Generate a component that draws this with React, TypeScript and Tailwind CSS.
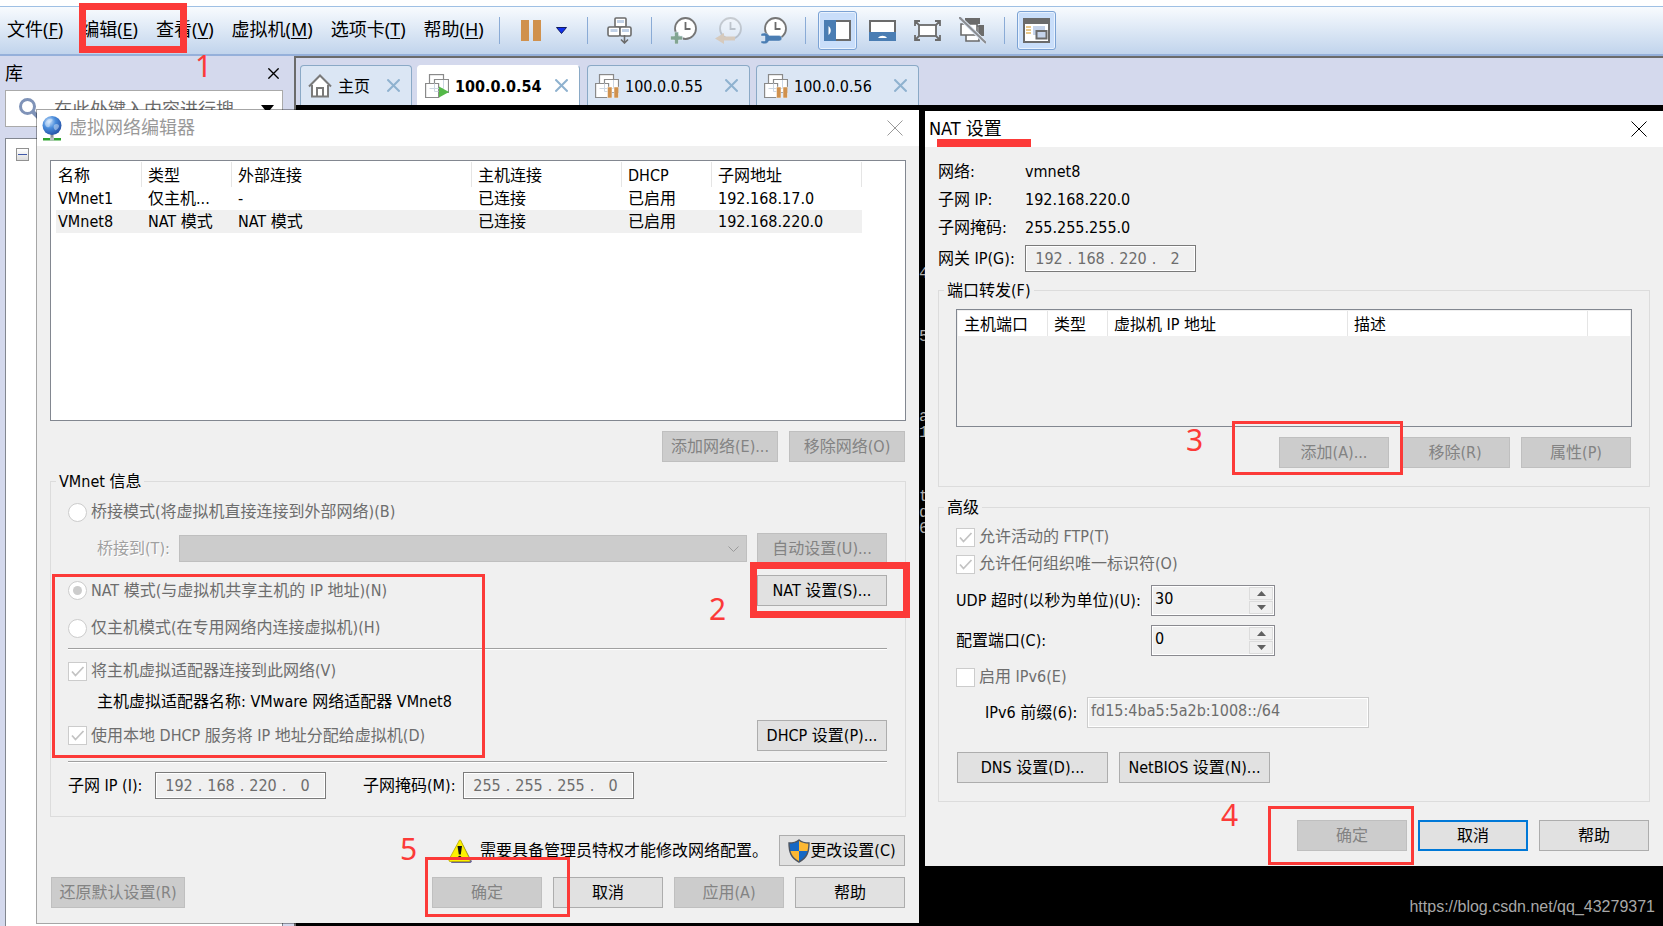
import type { ReactNode } from "react";
import clsx from "clsx";

const MENUS = [
  ["文件", "F"],
  ["编辑", "E"],
  ["查看", "V"],
  ["虚拟机", "M"],
  ["选项卡", "T"],
  ["帮助", "H"],
];

const NETWORKS = [
  ["VMnet1", "仅主机...", "-", "已连接", "已启用", "192.168.17.0"],
  ["VMnet8", "NAT 模式", "NAT 模式", "已连接", "已启用", "192.168.220.0"],
];

/* ---------- icons ---------- */

function CloseIcon({ className }: { className?: string }) {
  return (
    <svg viewBox="0 0 16 16" className={clsx("shrink-0", className)} fill="none" stroke="currentColor">
      <path d="M0.5 0.5 15.5 15.5M15.5 0.5 0.5 15.5" />
    </svg>
  );
}

function PauseIcon() {
  return (
    <svg width="20" height="21" viewBox="0 0 20 21" fill="#d0914d">
      <path d="M0 0h8v21H0zM12 0h8v21h-8z" />
    </svg>
  );
}

function SendKeysIcon() {
  return (
    <svg width="25" height="27" viewBox="0 0 25 27" fill="#fff" stroke="#6b6b6b" strokeWidth="1.6">
      <rect x="8" y="1" width="11" height="9" rx="1" />
      <rect x="1" y="10" width="12" height="9" rx="1.5" />
      <rect x="13" y="10" width="11" height="9" rx="1.5" />
      <path d="M10 3h7v3h-7zM3.500 12h7v3h-7zM15 12h7v3h-7z" fill="#c2d2e8" stroke="none" />
      <path d="M17.500 18v8M14 22.500l3.500 3.500 3.500-3.500" fill="none" />
    </svg>
  );
}

function ClockIcon({ kind }: { kind: "take" | "revert" | "manage" }) {
  return (
    <svg width="27" height="27" viewBox="0 0 27 27" fill="none">
      <g opacity={kind === "revert" ? 0.3 : 1}>
        <circle cx="15.500" cy="11.500" r="10.500" fill="#fff" stroke="#767676" strokeWidth="1.8" />
        <path d="M15.500 5v7h5" stroke="#6b6b6b" strokeWidth="1.8" />
      </g>
      {kind === "take" && (
        <path d="M4.500 15h4v4h4v4h-4v4h-4v-4h-4v-4h4z" fill="#82a592" stroke="#e4edf8" strokeWidth="0.6" />
      )}
      {kind === "revert" && <path d="M0 21.500 9 16v3.500h11v4H9V27z" fill="#d6cabd" />}
      {kind === "manage" && (
        <path
          d="M1 17c3-2 6.500-1 8 1.500h10a2.500 2.500 0 0 1 0 5.500H9C7.500 27 3.500 27.500 1 26v-2h4v-5H1z"
          fill="#4a7db3"
          stroke="#e4edf8"
          strokeWidth="0.4"
        />
      )}
    </svg>
  );
}

function SidebarIcon() {
  return (
    <svg width="27" height="21" viewBox="0 0 27 21">
      <rect x="1" y="1" width="25" height="19" fill="#fff" stroke="#6b6b6b" strokeWidth="2" />
      <path d="M0 0h12v21H0z" fill="#4a7db3" />
      <path d="M4.500 6c3 2 3 7 0 9z" fill="#fff" />
    </svg>
  );
}

function ThumbnailBarIcon() {
  return (
    <svg width="27" height="21" viewBox="0 0 27 21">
      <rect x="1" y="1" width="25" height="19" fill="#fff" stroke="#6b6b6b" strokeWidth="2" />
      <path d="M0 12h27v9H0z" fill="#4a7db3" />
      <path d="M9 18c2-3 7-3 9 0z" fill="#fff" />
    </svg>
  );
}

function FullScreenIcon() {
  return (
    <svg width="27" height="21" viewBox="0 0 27 21" fill="none" stroke="#6b6b6b" strokeWidth="1.8">
      <rect x="5" y="5" width="17" height="11" fill="#fff" />
      <path d="M1 6V1h5M1 1l4 4M21 1h5v5M26 1l-4 4M1 15v5h5M1 20l4-4M26 15v5h-5M26 20l-4-4" />
    </svg>
  );
}

function UnityIcon() {
  return (
    <svg width="27" height="27" viewBox="0 0 27 27">
      <path d="M6 1h15v6H6zM20 8h5v11h-5z" fill="#6b6b6b" />
      <path d="M7 9h13v15H7z" fill="#fff" stroke="#6b6b6b" strokeWidth="1.6" />
      <path d="M2 7h16v11H2z" fill="#fff" stroke="#6b6b6b" strokeWidth="1.6" />
      <path d="M0 0l27 26" stroke="#e0eaf7" strokeWidth="4" />
      <path d="M0 0l27 26" stroke="#8b8d91" strokeWidth="2.2" />
    </svg>
  );
}

function ConsoleIcon() {
  return (
    <svg width="27" height="25" viewBox="0 0 27 25">
      <rect x="1" y="1" width="25" height="23" fill="#fff" stroke="#6b6b6b" strokeWidth="2" />
      <path d="M0 0h27v6H0z" fill="#6b6b6b" />
      <path d="M3 9h5M3 12h5M3 15h5" stroke="#e2b664" strokeWidth="1.5" />
      <path d="M10 8h12v9H10z" fill="#c5d3ea" />
      <rect x="13.500" y="13" width="10" height="7.500" fill="#c5d3ea" stroke="#6b6b6b" strokeWidth="2" />
    </svg>
  );
}

function HomeIcon() {
  return (
    <svg width="24" height="24" viewBox="0 0 24 24" fill="none" stroke="#7a7a7a" strokeWidth="2">
      <path d="M4 11v11h16V11L12 2.500z" fill="#fff" stroke="none" />
      <path d="M4 11v11.500h16V11M9 22v-8h6v8" />
      <path d="M1 12.500 12 1.500l11 11" />
    </svg>
  );
}

function VmIcon({ state }: { state: "running" | "paused" }) {
  return (
    <svg width="24" height="24" viewBox="0 0 24 24" fill="none" stroke="#8a8a8a" strokeWidth="1.2">
      <rect x="4.500" y="0.600" width="14" height="14" fill="#fff" />
      <path d="M9.500 5.500h14v13h-14z" fill="#fff" />
      <path d="M0.600 9.500h13v14h-13z" fill="#fff" />
      <path d="M9.500 9.500v8h4M4.500 14.500h9M18.500 6v8.500h-5" stroke="#ccd6e2" strokeWidth="1" />
      {state === "running" ? (
        <path d="M14 12.500 24 18l-10 5.500z" fill="#54b948" stroke="none" />
      ) : (
        <path d="M12.500 13h4.500v11h-4.500zM19 13h4.500v11H19z" fill="#d0914d" stroke="#fff" strokeWidth="0.5" />
      )}
    </svg>
  );
}

function GlobeIcon() {
  return (
    <svg width="20" height="25" viewBox="0 0 20 25" className="shrink-0">
      <defs>
        <radialGradient id="globe" cx="0.35" cy="0.3" r="0.75">
          <stop offset="0" stopColor="#cfe4fb" />
          <stop offset="0.45" stopColor="#4a8ddc" />
          <stop offset="1" stopColor="#2450a5" />
        </radialGradient>
      </defs>
      <path d="M8.500 18h3v4h-3z" fill="#8e9499" />
      <path d="M1 22h18v2.500H1z" fill="#2fa32f" />
      <path d="M8 21.500h4v3H8z" fill="#b9bec2" />
      <circle cx="10" cy="9.500" r="9.500" fill="url(#globe)" />
      <path d="M3 7c2-4 5-5 7-4s-1 3-2 4 1 3-1 4-4-1-4-4zM12 9c2-2 5-1 5 1s-3 5-4 4-2-3-1-5z" fill="#e6f1fd" opacity="0.45" />
    </svg>
  );
}

function WarningIcon() {
  return (
    <svg width="24" height="24" viewBox="0 0 24 24" className="shrink-0">
      <path d="M13 2 24 22.500 22.500 24H3z" fill="#6a6496" />
      <path d="M11.500 1 1 20.500q-.5 2 1 2h19q1.500 0 1-2L12.500 1q-.5-.6-1 0z" fill="#fdf100" stroke="#b9a800" strokeWidth="0.8" />
      <path d="M9.500 7h4.500l-1.200 8.500h-2z" fill="#111" />
      <circle cx="11.700" cy="18.500" r="1.700" fill="#111" />
    </svg>
  );
}

function ShieldIcon() {
  return (
    <svg width="22" height="24" viewBox="0 0 22 24" className="shrink-0">
      <defs>
        <clipPath id="shield">
          <path d="M11 1C8 3.500 4.500 4 1 4c0 9 2 15 10 19 8-4 10-10 10-19-3.500 0-7-.5-10-3z" />
        </clipPath>
      </defs>
      <g clipPath="url(#shield)">
        <path d="M0 0h11v12H0zM11 12h11v12H11z" fill="#1668c4" />
        <path d="M11 0h11v12H11zM0 12h11v12H0z" fill="#fdb833" />
      </g>
      <path
        d="M11 1C8 3.500 4.500 4 1 4c0 9 2 15 10 19 8-4 10-10 10-19-3.500 0-7-.5-10-3z"
        fill="none"
        stroke="#4e5560"
        strokeWidth="1.4"
      />
    </svg>
  );
}

/* ---------- shared controls ---------- */

function Btn({ children, className, disabled, primary }: { children: ReactNode; className?: string; disabled?: boolean; primary?: boolean }) {
  return (
    <button
      type="button"
      disabled={disabled}
      className={clsx(
        "flex h-[31px] shrink-0 items-center justify-center whitespace-nowrap",
        disabled && "border border-[#bfbfbf] bg-[#cccccc] text-[#838383]",
        !disabled && !primary && "border border-[#adadad] bg-[#e1e1e1]",
        primary && "border-2 border-[#0078d7] bg-[#e1e1e1]",
        className,
      )}
    >
      {children}
    </button>
  );
}

function Check({ label, checked, className }: { label: string; checked?: boolean; className?: string }) {
  return (
    <label className={clsx("flex h-5 items-center gap-1 text-[#6d6d6d]", className)}>
      <span className="relative flex">
        <input type="checkbox" disabled defaultChecked={checked} className="h-[19px] w-[19px] appearance-none border border-[#cccccc] bg-white" />
        {checked && (
          <svg viewBox="0 0 19 19" className="absolute inset-0" fill="none" stroke="#c3c3c3" strokeWidth="1.8">
            <path d="M4 9.500 7.500 13.500 15.500 5" />
          </svg>
        )}
      </span>
      <span>{label}</span>
    </label>
  );
}

function Radio({ label, checked, className }: { label: string; checked?: boolean; className?: string }) {
  return (
    <label className={clsx("flex h-5 items-center gap-1 text-[#6d6d6d]", className)}>
      <span className="relative flex">
        <input type="radio" name="mode" disabled defaultChecked={checked} className="h-[19px] w-[19px] appearance-none rounded-full border border-[#cccccc] bg-white" />
        {checked && <span className="absolute inset-[5px] rounded-full bg-[#cccccc]" />}
      </span>
      <span>{label}</span>
    </label>
  );
}

function IpField({ label, parts }: { label: string; parts: string[] }) {
  return (
    <div role="group" aria-label={label} className="flex h-[27px] w-[171px] items-center border border-[#7a7a7a] bg-[#f0f0f0] pl-1.5 text-[#6d6d6d] inset-ring inset-ring-white">
      {parts.map((part, i) => (
        <div key={i} className="flex">
          <input disabled aria-label={`${label} ${i + 1}`} defaultValue={part} className="w-[34px] text-center" />
          {i < 3 && <span className="w-2 text-center">.</span>}
        </div>
      ))}
    </div>
  );
}

function Spinner({ id, value }: { id: string; value: string }) {
  return (
    <div className="flex h-[31px] w-[124px] border border-[#8a8a90] bg-[#f0f0f0] inset-ring inset-ring-white">
      <input id={id} defaultValue={value} className="h-[25px] min-w-0 flex-1 pl-[3px]" />
      <div className="flex w-[26px] flex-col gap-px p-px">
        <button type="button" aria-label="增加" className="flex flex-1 items-center justify-center border border-[#dcdcdc]">
          <svg width="9" height="5" viewBox="0 0 9 5" fill="#606060">
            <path d="M0 5 4.500 0 9 5z" />
          </svg>
        </button>
        <button type="button" aria-label="减少" className="flex flex-1 items-center justify-center border border-[#dcdcdc]">
          <svg width="9" height="5" viewBox="0 0 9 5" fill="#606060">
            <path d="M0 0h9L4.500 5z" />
          </svg>
        </button>
      </div>
    </div>
  );
}

function Group({ title, children, className }: { title: string; children: ReactNode; className?: string }) {
  return (
    <fieldset className={clsx("border border-[#dcdcdc] pr-[18px] pl-[17px]", className)}>
      <legend className="-ml-3 h-5 px-[3px]">{title}</legend>
      {children}
    </fieldset>
  );
}

function Rule({ className }: { className?: string }) {
  return <div className={clsx("h-0.5 border-t border-b border-t-[#a0a0a0] border-b-white", className)} />;
}

function HeadCell({ children }: { children?: ReactNode }) {
  return <th className="h-[25px] border-r border-[#e5e5e5] bg-white pt-0.5 pl-1.5 text-left font-normal whitespace-nowrap">{children}</th>;
}

/* ---------- main window ---------- */

function Separator() {
  return <div className="h-[27px] w-px bg-[#8aabd6]" />;
}

function ToolButton({ label, active, children }: { label: string; active?: boolean; children: ReactNode }) {
  return (
    <button
      type="button"
      aria-label={label}
      className={clsx(
        "flex h-[39px] w-[39px] items-center justify-center rounded-[3px] border",
        active ? "border-[#7ba2d4] bg-[#c9defa] inset-ring inset-ring-white/60" : "border-transparent",
      )}
    >
      {children}
    </button>
  );
}

function Toolbar() {
  return (
    <header className="mt-1.5 flex h-[50px] shrink-0 items-center border-t border-b-2 border-t-[#9fc0e4] border-b-[#95b0da] bg-linear-to-b from-[#f8fbfe] to-[#c1d4ec] pl-[7px] font-['Noto_Sans','Noto_Sans_CJK_SC',sans-serif] text-lg">
      <nav className="flex w-[492px] shrink-0 gap-[18px] pb-1 whitespace-nowrap">
        {MENUS.map(([name, key]) => (
          <button key={key} type="button">
            {name}(<span className="underline underline-offset-2">{key}</span>)
          </button>
        ))}
      </nav>
      <Separator />
      <button type="button" aria-label="挂起" className="ml-[21px]">
        <PauseIcon />
      </button>
      <button type="button" aria-label="电源选项" className="mr-5 ml-[15px]">
        <svg width="11" height="7" viewBox="0 0 11 7">
          <path d="M0.500 0.500h10L5.500 6.500z" fill="#1030f0" stroke="#111c60" />
        </svg>
      </button>
      <Separator />
      <button type="button" aria-label="发送 Ctrl+Alt+Del" className="mx-[19px]">
        <SendKeysIcon />
      </button>
      <Separator />
      <div className="mr-[12px] ml-[12px] flex gap-1.5">
        <ToolButton label="拍摄快照"><ClockIcon kind="take" /></ToolButton>
        <ToolButton label="恢复快照"><ClockIcon kind="revert" /></ToolButton>
        <ToolButton label="管理快照"><ClockIcon kind="manage" /></ToolButton>
      </div>
      <Separator />
      <div className="mr-[12px] ml-[12px] flex gap-1.5">
        <ToolButton label="显示库" active><SidebarIcon /></ToolButton>
        <ToolButton label="缩略图栏"><ThumbnailBarIcon /></ToolButton>
        <ToolButton label="全屏"><FullScreenIcon /></ToolButton>
        <ToolButton label="Unity"><UnityIcon /></ToolButton>
      </div>
      <Separator />
      <div className="ml-[12px]">
        <ToolButton label="控制台视图" active><ConsoleIcon /></ToolButton>
      </div>
    </header>
  );
}

function Library() {
  return (
    <aside className="flex w-[294px] shrink-0 flex-col pr-[11px] pl-[5px] font-['Noto_Sans','Noto_Sans_CJK_SC',sans-serif] text-lg">
      <div className="flex h-[34px] shrink-0 items-center justify-between pr-1">
        <h2>库</h2>
        <button type="button" aria-label="关闭库">
          <CloseIcon className="h-[11px] w-[11px] stroke-[2px]" />
        </button>
      </div>
      <label className="flex h-[37px] shrink-0 items-center border border-[#aaaaaa] bg-white pr-2 pl-3">
        <svg width="24" height="24" viewBox="0 0 24 24" fill="none" stroke="#7f93b8" strokeWidth="3">
          <circle cx="9.500" cy="9.500" r="7" />
          <path d="M14.500 14.500 22 22" strokeWidth="4" />
        </svg>
        <input aria-label="搜索" placeholder="在此处键入内容进行搜" className="ml-3 min-w-0 flex-1 placeholder:text-[#6d6d6d]" />
        <svg width="13" height="8" viewBox="0 0 13 8">
          <path d="M0 0h13L6.500 8z" />
        </svg>
      </label>
      <div className="mt-[11px] flex-1 border border-b-0 border-[#828790] bg-white pt-[9px] pl-2.5">
        <button type="button" aria-label="折叠" className="flex h-[13px] w-[13px] items-center border border-[#919191] bg-linear-to-b from-white to-[#dcdcdc] px-px">
          <span className="h-px w-full bg-[#4058a8]" />
        </button>
      </div>
    </aside>
  );
}

function Tab({ label, icon, active, className }: { label: string; icon: ReactNode; active?: boolean; className?: string }) {
  return (
    <div
      className={clsx(
        "flex h-10 items-center rounded-t-[4px] border border-b-0 pr-[11px] pl-[7px]",
        active ? "border-white border-r-[#8aa9c6] bg-white font-bold" : "border-[#8aa9c6] bg-[#dbe6f4]",
        className,
      )}
    >
      {icon}
      <button type="button" className="ml-1.5 flex-1 pt-0.5 text-left">
        {label}
      </button>
      <button type="button" aria-label={`关闭 ${label}`} className="text-[#8fb2cf]">
        <CloseIcon className="h-[13px] w-[13px] stroke-[2.5px]" />
      </button>
    </div>
  );
}

function Workspace() {
  return (
    <main className="flex min-w-0 flex-1 flex-col border-t-2 border-l-2 border-[#6b6b6b]">
      <div className="flex h-[47px] shrink-0 items-end pl-1">
        <Tab label="主页" icon={<HomeIcon />} className="w-28" />
        <Tab label="100.0.0.54" icon={<VmIcon state="running" />} active className="ml-[5px] w-[163px]" />
        <Tab label="100.0.0.55" icon={<VmIcon state="paused" />} className="ml-[7px] w-[163px]" />
        <Tab label="100.0.0.56" icon={<VmIcon state="paused" />} className="ml-[6px] w-[163px]" />
      </div>
      <div className="relative flex-1 overflow-hidden bg-black font-['Liberation_Mono',monospace] text-[#b0b0b0]">
        <span className="absolute top-[158px] left-[623px]">4</span>
        <span className="absolute top-[221px] left-[623px]">5</span>
        <span className="absolute top-[301px] left-[623px]">a</span>
        <span className="absolute top-[317px] left-[623px]">1</span>
        <span className="absolute top-[381px] left-[623px]">t</span>
        <span className="absolute top-[397px] left-[623px]">d</span>
        <span className="absolute top-[413px] left-[623px]">6</span>
        <a href="https://blog.csdn.net/qq_43279371" className="absolute right-2 bottom-2 font-['Liberation_Sans',sans-serif] text-[#a8a8a8]">
          https://blog.csdn.net/qq_43279371
        </a>
      </div>
    </main>
  );
}

/* ---------- dialogs ---------- */

function NetworkEditor() {
  return (
    <section className="absolute top-[109px] left-9 w-[884px] border border-black/35 bg-[#f0f0f0] bg-clip-padding">
      <div className="flex h-9 items-center bg-white pr-4 pl-[5px] text-[#999999]">
        <GlobeIcon />
        <h1 className="ml-[7px] flex-1 text-lg">虚拟网络编辑器</h1>
        <button type="button" aria-label="关闭">
          <CloseIcon className="h-4 w-4" />
        </button>
      </div>

      <div className="px-[13px] pt-3.5 pb-[15px]">
        <div className="h-[261px] border border-[#828790] bg-white p-px">
          <table className="w-[810px] table-fixed border-separate border-spacing-0">
            <colgroup>
              <col className="w-[90px]" />
              <col className="w-[90px]" />
              <col className="w-[240px]" />
              <col className="w-[150px]" />
              <col className="w-[90px]" />
              <col className="w-[150px]" />
            </colgroup>
            <thead>
              <tr>
                <HeadCell>名称</HeadCell>
                <HeadCell>类型</HeadCell>
                <HeadCell>外部连接</HeadCell>
                <HeadCell>主机连接</HeadCell>
                <HeadCell>DHCP</HeadCell>
                <HeadCell>子网地址</HeadCell>
              </tr>
            </thead>
            <tbody>
              {NETWORKS.map((row, i) => (
                <tr key={row[0]} className={clsx(i === 1 && "bg-[#f0f0f0]")}>
                  {row.map((cell, j) => (
                    <td key={j} className={clsx("h-[23px] whitespace-nowrap", j === 0 ? "border-l-4 border-white pl-0.5" : "pl-1.5")}>
                      {cell}
                    </td>
                  ))}
                </tr>
              ))}
            </tbody>
          </table>
        </div>

        <div className="mt-2.5 flex justify-end gap-[11px] pr-px">
          <Btn disabled className="w-[116px]">添加网络(E)...</Btn>
          <Btn disabled className="w-[116px]">移除网络(O)</Btn>
        </div>

        <Group title="VMnet 信息" className="mt-[9px] pb-[17px]">
          <Radio label="桥接模式(将虚拟机直接连接到外部网络)(B)" className="mt-[11px]" />
          <div className="mt-[11px] flex items-center pl-[29px]">
            <label htmlFor="bridge" className="w-[82px] text-[#a0a0a0] text-shadow-[1px_1px_0_#ffffff]">
              桥接到(T):
            </label>
            <div className="relative flex flex-1">
              <select id="bridge" disabled className="h-[27px] w-full appearance-none border border-[#bfbfbf] bg-[#cccccc]" />
              <svg width="11" height="6" viewBox="0 0 11 6" className="absolute top-[11px] right-2" fill="none" stroke="#9a9a9a">
                <path d="M0.500 0.500l5 5 5-5" />
              </svg>
            </div>
            <Btn disabled className="ml-2.5 w-[130px]">自动设置(U)...</Btn>
          </div>
          <div className="mt-[11px] flex items-center justify-between">
            <Radio label="NAT 模式(与虚拟机共享主机的 IP 地址)(N)" checked />
            <Btn className="w-[130px]">NAT 设置(S)...</Btn>
          </div>
          <Radio label="仅主机模式(在专用网络内连接虚拟机)(H)" className="mt-3" />
          <Rule className="mt-2.5" />
          <Check label="将主机虚拟适配器连接到此网络(V)" checked className="mt-[11px]" />
          <p className="mt-2.5 h-5 pl-[29px]">主机虚拟适配器名称: VMware 网络适配器 VMnet8</p>
          <div className="mt-[9px] flex items-center justify-between">
            <Check label="使用本地 DHCP 服务将 IP 地址分配给虚拟机(D)" checked />
            <Btn className="w-[130px]">DHCP 设置(P)...</Btn>
          </div>
          <Rule className="mt-2.5" />
          <div className="mt-[9px] flex items-center">
            <span className="w-[87px]">子网 IP (I):</span>
            <IpField label="子网 IP" parts={["192", "168", "220", "0"]} />
            <span className="ml-[37px] w-[100px]">子网掩码(M):</span>
            <IpField label="子网掩码" parts={["255", "255", "255", "0"]} />
          </div>
        </Group>

        <div className="mt-[18px] flex items-center justify-end pr-px">
          <WarningIcon />
          <p className="ml-2 w-[299px] whitespace-nowrap">需要具备管理员特权才能修改网络配置。</p>
          <Btn className="w-[126px]">
            <ShieldIcon />
            更改设置(C)
          </Btn>
        </div>
        <div className="mt-[11px] flex gap-[11px] px-px">
          <Btn disabled className="mr-auto w-[134px]">还原默认设置(R)</Btn>
          <Btn disabled className="w-[110px]">确定</Btn>
          <Btn className="w-[110px]">取消</Btn>
          <Btn disabled className="w-[110px]">应用(A)</Btn>
          <Btn className="w-[110px]">帮助</Btn>
        </div>
      </div>
    </section>
  );
}

function NatSettings() {
  return (
    <section className="absolute top-[111px] right-0 left-[925px] bg-[#f0f0f0]">
      <div className="flex h-9 items-center bg-white pr-4 pl-1">
        <h1 className="flex-1 text-lg">NAT 设置</h1>
        <button type="button" aria-label="关闭">
          <CloseIcon className="h-4 w-4" />
        </button>
      </div>

      <div className="px-[13px] pt-3.5 pb-[15px]">
        <dl className="grid grid-cols-[87px_1fr] gap-y-1.5">
          <dt>网络:</dt>
          <dd>vmnet8</dd>
          <dt>子网 IP:</dt>
          <dd>192.168.220.0</dd>
          <dt>子网掩码:</dt>
          <dd>255.255.255.0</dd>
        </dl>
        <div className="mt-1.5 flex items-center">
          <span className="w-[87px] whitespace-nowrap">网关 IP(G):</span>
          <IpField label="网关 IP" parts={["192", "168", "220", "2"]} />
        </div>

        <Group title="端口转发(F)" className="mt-2 pb-[18px]">
          <div className="mt-[9px] -mr-px h-[118px] border border-[#828790] p-px">
            <table className="w-full table-fixed border-separate border-spacing-0">
              <colgroup>
                <col className="w-[90px]" />
                <col className="w-[60px]" />
                <col className="w-[240px]" />
                <col className="w-[240px]" />
                <col />
              </colgroup>
              <thead>
                <tr>
                  <HeadCell>主机端口</HeadCell>
                  <HeadCell>类型</HeadCell>
                  <HeadCell>虚拟机 IP 地址</HeadCell>
                  <HeadCell>描述</HeadCell>
                  <td className="bg-white" />
                </tr>
              </thead>
            </table>
          </div>
          <div className="mt-2.5 flex justify-end gap-[11px]">
            <Btn disabled className="w-[110px]">添加(A)...</Btn>
            <Btn disabled className="w-[110px]">移除(R)</Btn>
            <Btn disabled className="w-[110px]">属性(P)</Btn>
          </div>
        </Group>

        <Group title="高级" className="mt-2.5 pb-[18px]">
          <Check label="允许活动的 FTP(T)" checked className="mt-2.5" />
          <Check label="允许任何组织唯一标识符(O)" checked className="mt-[7px]" />
          <div className="mt-[11px] flex items-center">
            <label htmlFor="udp" className="w-[195px] whitespace-nowrap">UDP 超时(以秒为单位)(U):</label>
            <Spinner id="udp" value="30" />
          </div>
          <div className="mt-[9px] flex items-center">
            <label htmlFor="port" className="w-[195px]">配置端口(C):</label>
            <Spinner id="port" value="0" />
          </div>
          <Check label="启用 IPv6(E)" className="mt-[11px]" />
          <div className="mt-2.5 flex items-center pl-[29px]">
            <label htmlFor="prefix" className="w-[102px]">IPv6 前缀(6):</label>
            <input
              id="prefix"
              disabled
              defaultValue="fd15:4ba5:5a2b:1008::/64"
              className="h-[31px] w-[282px] border border-[#cccccc] pb-1 pl-[3px] text-[#6d6d6d] inset-ring inset-ring-white"
            />
          </div>
          <div className="mt-6 flex gap-[11px] pl-px">
            <Btn className="w-[151px]">DNS 设置(D)...</Btn>
            <Btn className="w-[151px]">NetBIOS 设置(N)...</Btn>
          </div>
        </Group>

        <div className="mt-[18px] flex justify-end gap-[11px] pr-px">
          <Btn disabled className="w-[110px]">确定</Btn>
          <Btn primary className="w-[110px]">取消</Btn>
          <Btn className="w-[110px]">帮助</Btn>
        </div>
      </div>
    </section>
  );
}

/* Red step markers drawn over the windows */
function Steps() {
  return (
    <div className="pointer-events-none absolute inset-0 font-['Noto_Sans',sans-serif] text-[30px] leading-[30px] text-[#fc3a38]">
      <div className="absolute top-[3px] left-[79px] h-[50px] w-[108px] border-[7px] border-[#fc3a38]" />
      <span className="absolute top-[51px] left-[195px]">1</span>
      <div className="absolute top-[562px] left-[750px] h-14 w-40 border-[7px] border-[#fc3a38]" />
      <span className="absolute top-[594px] left-[709px]">2</span>
      <div className="absolute top-[139px] left-[937px] h-2 w-[94px] bg-[#fc3a38]" />
      <div className="absolute top-[421px] left-[1232px] h-[54px] w-[171px] border-[3px] border-[#fc3a38]" />
      <span className="absolute top-[425px] left-[1186px]">3</span>
      <div className="absolute top-[806px] left-[1268px] h-[59px] w-[146px] border-[3px] border-[#fc3a38]" />
      <span className="absolute top-[800px] left-[1221px]">4</span>
      <div className="absolute top-[857px] left-[425px] h-[60px] w-[145px] border-[3px] border-[#fc3a38]" />
      <span className="absolute top-[834px] left-[400px]">5</span>
      <div className="absolute top-[574px] left-[52px] h-[184px] w-[433px] border-[3px] border-[#fc3a38]" />
    </div>
  );
}

export default function App() {
  return (
    <div className="relative flex min-h-screen flex-col bg-white font-['DejaVu_Sans_Condensed','Noto_Sans_CJK_SC',sans-serif] text-base leading-[22px] text-black">
      <Toolbar />
      <div className="flex flex-1 bg-[#d4d9ed]">
        <Library />
        <Workspace />
      </div>
      <NetworkEditor />
      <NatSettings />
      <Steps />
    </div>
  );
}
